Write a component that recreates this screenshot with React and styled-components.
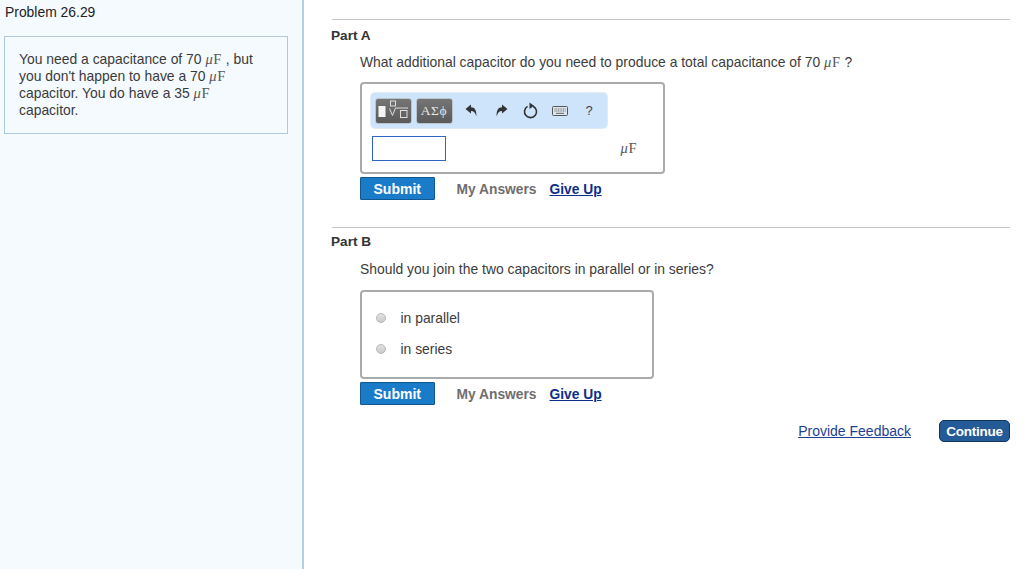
import React from 'react'
import styled, { createGlobalStyle } from 'styled-components'

const GlobalStyle = createGlobalStyle`
  html, body {
    margin: 0;
    padding: 0;
    background: #fff;
  }
  body {
    font-family: "Liberation Sans", Arial, sans-serif;
    font-size: 14px;
    color: #333;
  }
`

const Page = styled.div`
  display: flex;
  width: 1024px;
  height: 569px;
  overflow: hidden;
`

const Sidebar = styled.aside`
  box-sizing: border-box;
  width: 304px;
  flex: none;
  padding: 4px 14px 0 4px;
  background: #f5faff;
  border-right: 2px solid #b5cde3;
`

const ProblemTitle = styled.div`
  height: 16px;
  line-height: 16px;
  padding-left: 1px;
  font-size: 13.9px;
  color: #222;
`

const ProblemBox = styled.div`
  box-sizing: border-box;
  height: 98px;
  margin-top: 16px;
  padding: 14px 14px 0;
  background: #f5faff;
  border: 1px solid #b0c8de;
  font-size: 13.9px;
  line-height: 17px;
  color: #3a3a3a;
`

const Main = styled.main`
  box-sizing: border-box;
  width: 720px;
  padding: 19px 14px 0 28px;
`

const Part = styled.section`
  margin-top: ${({ $gap }) => $gap || 0}px;
  border-top: 1px solid #c4c4c4;
  padding-top: ${({ $top }) => $top}px;
`

const PartTitle = styled.h2`
  margin: 0 0 0 -1px;
  height: 16px;
  line-height: 16px;
  font-size: 13.6px;
  font-weight: 700;
  color: #333;
`

const Body = styled.div`
  padding-left: 28px;
`

const Question = styled.p`
  margin: ${({ $top }) => $top}px 0 0;
  height: 16px;
  line-height: 16px;
  font-size: 13.9px;
  color: #3c3c3c;
`

const Unit = styled.span`
  font-family: "Liberation Serif", "Times New Roman", serif;
  font-size: 14.5px;
  letter-spacing: 0.6px;
  color: #555;
  i {
    font-style: italic;
  }
`

const AnswerBox = styled.div`
  box-sizing: border-box;
  width: ${({ $width }) => $width}px;
  height: ${({ $height }) => $height}px;
  margin-top: ${({ $top }) => $top}px;
  margin-left: -0.5px;
  background: #fff;
  border: 2px solid #aaa;
  border-radius: 4px;
`

const MathArea = styled.div`
  display: flex;
  flex-direction: column;
  padding: 9px 0 0 9px;
`

const Toolbar = styled.div`
  box-sizing: border-box;
  display: flex;
  align-items: center;
  width: 236px;
  height: 35px;
  padding-left: 4px;
  background: #cde4fb;
  border-radius: 4px;
  box-shadow: 0 0 0 1px #e3ecf4;
`

const MathButton = styled.div`
  box-sizing: border-box;
  display: flex;
  align-items: center;
  justify-content: center;
  width: 37px;
  height: 26px;
  margin-right: 4px;
  border: 1px solid #b9c3cc;
  border-radius: 3px;
  background: linear-gradient(#757575, #5a5a5a);
  color: #e6e6e6;
  font-family: "Liberation Serif", serif;
  font-size: 13.5px;
  letter-spacing: 0.6px;
`

const ToolIcon = styled.button`
  display: flex;
  align-items: center;
  justify-content: center;
  flex: none;
  width: ${({ $width }) => $width}px;
  height: 24px;
  padding: 0;
  border: 0;
  background: none;
  color: #444;
  font-family: "Liberation Sans", sans-serif;
  font-size: 13px;
`

const InputRow = styled.div`
  display: flex;
  align-items: center;
  margin-top: 8px;
  padding-left: 1px;
`

const ValueInput = styled.div`
  box-sizing: border-box;
  width: 74px;
  height: 25px;
  border: 1.5px solid #2f66c4;
  background: #fff;
`

const UnitSlot = styled.div`
  margin-left: 175px;
  margin-top: -1px;
`

const ActionRow = styled.div`
  display: flex;
  align-items: center;
  margin-top: ${({ $top }) => $top}px;
  margin-left: -0.5px;
  height: 23px;
`

const SubmitButton = styled.button`
  box-sizing: border-box;
  width: 75.5px;
  height: 23px;
  padding: 0;
  background: #1a7bc9;
  border: 1px solid #10598f;
  border-radius: 1px;
  color: #fff;
  font-family: "Liberation Sans", sans-serif;
  font-size: 14px;
  font-weight: 700;
`

const MyAnswers = styled.span`
  margin-left: 21.5px;
  padding-top: 1px;
  font-size: 13.8px;
  font-weight: 700;
  color: #6e6e6e;
`

const GiveUp = styled.a`
  margin-left: 13px;
  padding-top: 1px;
  font-size: 13.8px;
  font-weight: 700;
  color: #0c2f8a;
  text-decoration: underline;
`

const ChoiceList = styled.div`
  display: flex;
  flex-direction: column;
  gap: 15px;
  padding: 18px 0 0 14px;
`

const Choice = styled.label`
  display: flex;
  align-items: center;
  height: 16px;
  font-size: 13.9px;
  color: #3c3c3c;
`

const Radio = styled.span`
  box-sizing: border-box;
  width: 10px;
  height: 10px;
  margin-right: 15px;
  border: 1px solid #b8b8b8;
  border-radius: 50%;
  background: linear-gradient(#e2e2e2, #cacaca);
`

const Footer = styled.div`
  display: flex;
  align-items: center;
  justify-content: flex-end;
  gap: 28px;
  margin-top: 15px;
`

const Feedback = styled.a`
  font-size: 14px;
  color: #1c3f94;
  text-decoration: underline;
`

const ContinueButton = styled.button`
  box-sizing: border-box;
  width: 71px;
  height: 22px;
  padding: 0;
  background: #245a96;
  border: 1px solid #12355f;
  border-radius: 5px;
  color: #fff;
  font-family: "Liberation Sans", sans-serif;
  font-size: 13.5px;
  font-weight: 700;
  letter-spacing: -0.25px;
`

const Mu = () => (
  <Unit>
    <i>μ</i>F
  </Unit>
)

const TemplateIcon = () => (
  <svg width="34" height="24" viewBox="0 0 34 24">
    <rect x="2.5" y="7" width="7" height="11" fill="#f4f4f4" />
    <rect x="14.5" y="2" width="5" height="5" fill="none" stroke="#ddd" strokeWidth="1" />
    <path d="M13.5 9.5 L16.5 16.5 L19.5 9 H32" fill="none" stroke="#ddd" strokeWidth="1" />
    <rect x="24.5" y="11.5" width="6.5" height="7" fill="none" stroke="#ddd" strokeWidth="1" />
  </svg>
)

const UndoIcon = () => (
  <svg width="13" height="14" viewBox="0 0 13 14">
    <path d="M0.5 5 L6 0.5 V3.3 C9.8 3.3 11.8 6.6 11.3 12.5 C10.4 8.8 8.8 7 6 7 V9.5 Z" fill="#333" />
  </svg>
)

const RedoIcon = () => (
  <svg width="13" height="14" viewBox="0 0 13 14">
    <path d="M12.5 5 L7 0.5 V3.3 C3.2 3.3 1.2 6.6 1.7 12.5 C2.6 8.8 4.2 7 7 7 V9.5 Z" fill="#333" />
  </svg>
)

const ResetIcon = () => (
  <svg width="15" height="17" viewBox="0 0 15 17">
    <path d="M4.6 4.4 A6 6 0 1 0 10 4.2" fill="none" stroke="#333" strokeWidth="1.6" />
    <path d="M6.5 0.5 L11 3.8 L6.5 7 Z" fill="#333" />
  </svg>
)

const KeyboardIcon = () => (
  <svg width="16" height="10" viewBox="0 0 16 10">
    <rect x="0.5" y="0.5" width="15" height="9" rx="1" fill="#dde6ee" stroke="#555" />
    <path d="M2.5 3 H13.5 M2.5 5 H13.5" stroke="#666" strokeWidth="1" strokeDasharray="1 0.7" />
    <path d="M4 7.3 H12" stroke="#666" strokeWidth="1" />
  </svg>
)

const Actions = ({ top }) => (
  <ActionRow $top={top}>
    <SubmitButton>Submit</SubmitButton>
    <MyAnswers>My Answers</MyAnswers>
    <GiveUp href="#">Give Up</GiveUp>
  </ActionRow>
)

const App = () => (
  <Page>
    <GlobalStyle />
    <Sidebar>
      <ProblemTitle>Problem 26.29</ProblemTitle>
      <ProblemBox>
        You need a capacitance of 70 <Mu /> , but
        <br />
        you don't happen to have a 70 <Mu />
        <br />
        capacitor. You do have a 35 <Mu />
        <br />
        capacitor.
      </ProblemBox>
    </Sidebar>
    <Main>
      <Part $top={8}>
        <PartTitle>Part A</PartTitle>
        <Body>
          <Question $top={10}>
            What additional capacitor do you need to produce a total capacitance of 70{' '}
            <Mu /> ?
          </Question>
          <AnswerBox $width={305} $height={92} $top={12}>
            <MathArea>
              <Toolbar>
                <MathButton>
                  <TemplateIcon />
                </MathButton>
                <MathButton>ΑΣϕ</MathButton>
                <ToolIcon $width={30}>
                  <UndoIcon />
                </ToolIcon>
                <ToolIcon $width={29}>
                  <RedoIcon />
                </ToolIcon>
                <ToolIcon $width={30}>
                  <ResetIcon />
                </ToolIcon>
                <ToolIcon $width={29}>
                  <KeyboardIcon />
                </ToolIcon>
                <ToolIcon $width={29}>?</ToolIcon>
              </Toolbar>
              <InputRow>
                <ValueInput />
                <UnitSlot>
                  <Mu />
                </UnitSlot>
              </InputRow>
            </MathArea>
          </AnswerBox>
          <Actions top={3} />
        </Body>
      </Part>
      <Part $gap={27} $top={6}>
        <PartTitle>Part B</PartTitle>
        <Body>
          <Question $top={11}>Should you join the two capacitors in parallel or in series?</Question>
          <AnswerBox $width={294} $height={89} $top={13}>
            <ChoiceList>
              <Choice>
                <Radio />
                in parallel
              </Choice>
              <Choice>
                <Radio />
                in series
              </Choice>
            </ChoiceList>
          </AnswerBox>
          <Actions top={3} />
        </Body>
      </Part>
      <Footer>
        <Feedback href="#">Provide Feedback</Feedback>
        <ContinueButton>Continue</ContinueButton>
      </Footer>
    </Main>
  </Page>
)

export default App
